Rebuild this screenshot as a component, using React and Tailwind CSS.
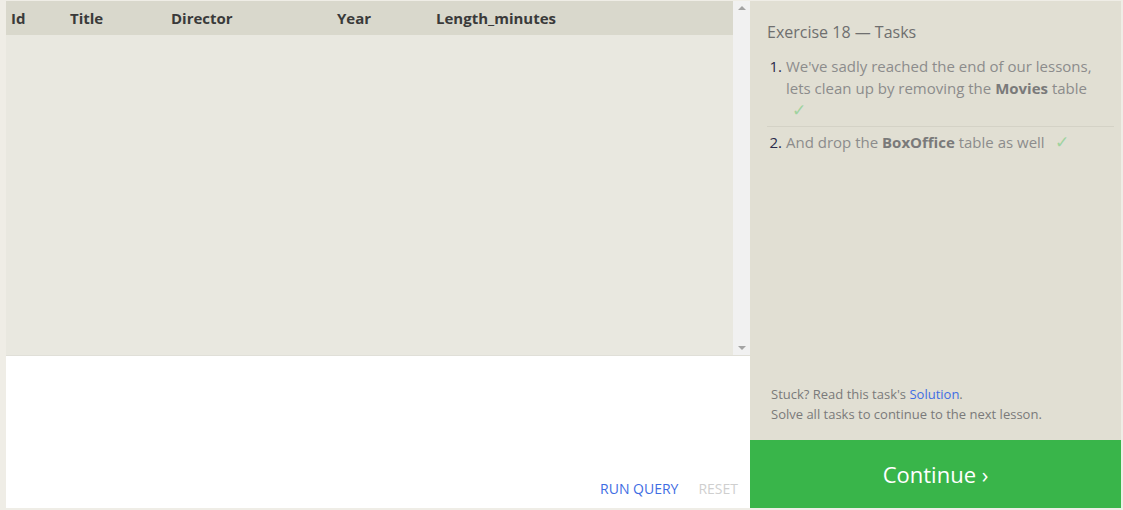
import React from "react";

const columns = [
  { name: "Id", w: "w-[59px]" },
  { name: "Title", w: "w-[101px]" },
  { name: "Director", w: "w-[166px]" },
  { name: "Year", w: "w-[99px]" },
  { name: "Length_minutes", w: "flex-1" },
];

const App = () => {
  return (
    <div className="w-[1123px] h-[510px] bg-[#efede6] flex pl-[6px] pt-px pb-[2px] pr-[2px] font-['Open_Sans',sans-serif] overflow-hidden">
      {/* Left: results + editor */}
      <div className="w-[744px] flex flex-col">
        <div className="h-[355px] flex border-b border-[#e0dfd8]">
          <div className="flex-1 bg-[#e9e8e0] flex flex-col">
            <div className="h-[34px] bg-[#d9d8cc] flex items-center text-[15px] font-bold text-[#3a3a3a]">
              {columns.map((c) => (
                <div key={c.name} className={`${c.w} pl-[5px]`}>
                  {c.name}
                </div>
              ))}
            </div>
          </div>
          {/* Scrollbar */}
          <div className="w-[17px] bg-[#f1f1f1] flex flex-col justify-between items-center py-[5px]">
            <div className="w-0 h-0 border-l-[4px] border-r-[4px] border-b-[4px] border-l-transparent border-r-transparent border-b-[#a3a3a3]" />
            <div className="w-0 h-0 border-l-[4px] border-r-[4px] border-t-[4px] border-l-transparent border-r-transparent border-t-[#a3a3a3]" />
          </div>
        </div>
        <div className="flex-1 bg-white flex items-end justify-end pb-[9px] pr-[12px] gap-[20px] text-[14px]">
          <span className="text-[#3f6de3]">RUN QUERY</span>
          <span className="text-[#cfcfcf]">RESET</span>
        </div>
      </div>

      {/* Right: tasks */}
      <div className="w-[371px] bg-[#e1dfd3] flex flex-col">
        <div className="flex-1 pl-[17px] pr-[7px] pt-[20px]">
          <h2 className="text-[16px] text-[#6f6f6f] leading-[22px]">Exercise 18 — Tasks</h2>
          <ol className="mt-[12px] text-[15px] leading-[22px] text-[#8c8c8c]">
            <li className="flex border-b border-[#d4d2c6] pb-[5px]">
              <span className="w-[19px] text-right pr-[4px] text-[#2a2a4a]">1.</span>
              <div className="flex-1">
                <div>
                  We've sadly reached the end of our lessons, lets clean up by removing the{" "}
                  <b className="text-[#7a7a7a]">Movies</b> table
                </div>
                <div className="pl-[6px] text-[17px] text-[#9fd39f]">✓</div>
              </div>
            </li>
            <li className="flex pt-[4px]">
              <span className="w-[19px] text-right pr-[4px] text-[#2a2a4a]">2.</span>
              <span className="flex-1">
                And drop the <b className="text-[#7a7a7a]">BoxOffice</b> table as well
                <span className="ml-[10px] text-[17px] text-[#9fd39f]">✓</span>
              </span>
            </li>
          </ol>
        </div>
        <div className="pl-[21px] pb-[16px] text-[13px] leading-[20px] text-[#7a7a7a]">
          <div>
            Stuck? Read this task's <span className="text-[#3f6de3]">Solution</span>.
          </div>
          <div>Solve all tasks to continue to the next lesson.</div>
        </div>
        <div className="h-[68px] bg-[#39b54a] flex items-center justify-center text-white text-[22px]">
          Continue ›
        </div>
      </div>
    </div>
  );
};

export default App;
